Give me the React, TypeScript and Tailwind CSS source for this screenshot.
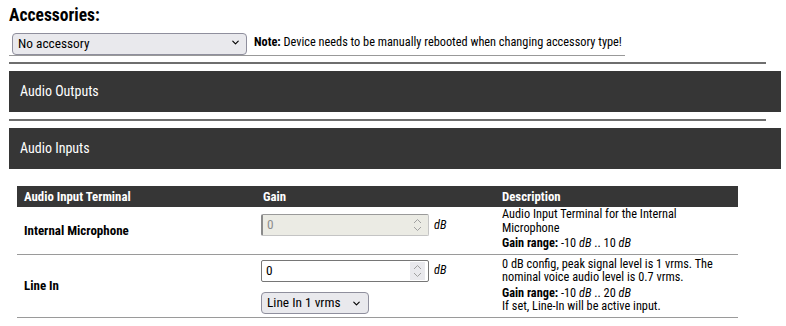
import { ChevronDown } from "lucide-react";

const cond = { fontFamily: '"Roboto Condensed", "Roboto", "Liberation Sans", sans-serif', fontStretch: "condensed" as const };
const ctrlFont = { fontFamily: '"Roboto", "Liberation Sans", sans-serif' };

const Spin = ({ shaded }: { shaded?: boolean }) => (
  <div className={`flex flex-col items-center justify-center w-[15px] h-[18px] ${shaded ? "bg-[#e9e9ed]" : ""}`}>
    <svg width="9" height="14" viewBox="0 0 9 14" fill="none" stroke="#a0a0a0" strokeWidth="1">
      <path d="M1 5 L4.5 1.5 L8 5" />
      <path d="M1 9 L4.5 12.5 L8 9" />
    </svg>
  </div>
);

const NumberBox = ({ value, disabled }: { value: string; disabled?: boolean }) => (
  <div
    className={`flex items-center w-[168px] h-[22px] pl-[4px] pr-[3px] rounded-[2px] ${
      disabled
        ? "bg-[#ebebe4] border border-[#c4c4c4] border-l-[#8a8a8a] border-t-[#9a9a9a] border-l-2"
        : "bg-white border border-[#767676]"
    }`}
  >
    <input
      readOnly
      value={value}
      className={`flex-1 min-w-0 outline-none bg-transparent text-[13.333px] ${disabled ? "text-[#8d8d8d]" : "text-black"}`}
      style={ctrlFont}
    />
    <Spin shaded={!disabled} />
  </div>
);

const SectionBar = ({ title }: { title: string }) => (
  <div className="bg-[#363636] h-[41px] flex items-center pl-[11px] text-white text-[14px] mr-[-4px]" style={cond}>
    {title}
  </div>
);

const Dropdown = ({ label, width, chevronRight }: { label: string; width: string; chevronRight: string }) => (
  <div className={`relative h-[22px] ${width}`}>
    <select
      className="appearance-none w-full h-full bg-[#e9e9ed] border border-[#8f8f9d] rounded-[4px] pl-[5px] text-[13.333px] text-black"
      style={ctrlFont}
      defaultValue="a"
    >
      <option value="a">{label}</option>
    </select>
    <ChevronDown className={`absolute top-[6px] w-[11px] h-[11px] pointer-events-none ${chevronRight}`} strokeWidth={2.5} />
  </div>
);

export default function App() {
  return (
    <div className="w-[786px] h-[326px] overflow-hidden bg-white text-black px-[9px] pt-[4px]" style={cond}>
      <h2 className="text-[17.5px] font-bold leading-[22px]">Accessories:</h2>

      <div className="flex items-center mt-[5px] pb-[2px] border-b border-[#999] w-[616px]">
        <div className="ml-[3px]">
          <Dropdown label="No accessory" width="w-[235px]" chevronRight="right-[6px]" />
        </div>
        <p className="ml-[7px] text-[12.3px]">
          <span className="font-bold">Note:</span> Device needs to be manually rebooted when changing accessory type!
        </p>
      </div>

      <div className="mt-[6px] w-[757px] border-t-2 border-[#6e6e6e]" />
      <div className="mt-[7px]">
        <SectionBar title="Audio Outputs" />
      </div>

      <div className="mt-[7px] w-[757px] border-t-2 border-[#6e6e6e]" />
      <div className="mt-[7px]">
        <SectionBar title="Audio Inputs" />
      </div>

      <table className="ml-[8px] mt-[17px] w-[721px] border-collapse text-[12.3px]" style={cond}>
        <thead>
          <tr className="bg-[#363636] text-white h-[21px] text-[12.8px]">
            <th className="w-[240px] text-left font-bold pl-[7px]">Audio Input Terminal</th>
            <th className="w-[240px] text-left font-bold pl-[6px]">Gain</th>
            <th className="text-left font-bold pl-[5px]">Description</th>
          </tr>
        </thead>
        <tbody>
          <tr className="border-b border-[#9a9a9a] h-[47px] align-top">
            <td className="pl-[7px] font-bold align-middle text-[13px]">Internal Microphone</td>
            <td className="pl-[4px] pt-[7px]">
              <div className="flex items-center gap-[5px]">
                <NumberBox value="0" disabled />
                <span className="italic">dB</span>
              </div>
            </td>
            <td className="pl-[5px] pr-[8px] pt-[1px] leading-[13.5px]">
              <div>Audio Input Terminal for the Internal Microphone</div>
              <div className="mt-[2px]">
                <span className="font-bold">Gain range:</span> -10 <i>dB</i> .. 10 <i>dB</i>
              </div>
            </td>
          </tr>
          <tr className="border-b border-[#9a9a9a] h-[63px] align-top">
            <td className="pl-[7px] font-bold align-middle text-[13px]">Line In</td>
            <td className="pl-[4px] pt-[5px] pb-[3px]">
              <div className="flex items-center gap-[5px]">
                <NumberBox value="0" />
                <span className="italic">dB</span>
              </div>
              <div className="mt-[10px]">
                <Dropdown label="Line In 1 vrms" width="w-[108px]" chevronRight="right-[7px]" />
              </div>
            </td>
            <td className="pl-[5px] pr-[8px] pt-[3px] pb-[2px] leading-[13px]">
              <div>0 dB config, peak signal level is 1 vrms. The nominal voice audio level is 0.7 vrms.</div>
              <div className="mt-[3px]">
                <span className="font-bold">Gain range:</span> -10 <i>dB</i> .. 20 <i>dB</i>
              </div>
              <div>If set, Line-In will be active input.</div>
            </td>
          </tr>
        </tbody>
      </table>
    </div>
  );
}
